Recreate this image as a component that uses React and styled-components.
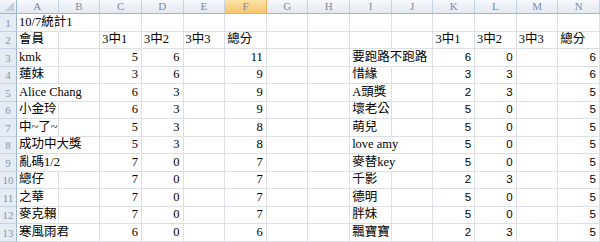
import React from 'react';
import styled, { createGlobalStyle } from 'styled-components';

const GlobalStyle = createGlobalStyle`
  html, body {
    margin: 0;
    padding: 0;
    background: #fff;
    overflow: hidden;
  }
`;

const COLS = ['A', 'B', 'C', 'D', 'E', 'F', 'G', 'H', 'I', 'J', 'K', 'L', 'M', 'N'];

const rows = [
  { A: '10/7統計1' },
  { A: '會員', C: '3中1', D: '3中2', E: '3中3', F: '總分', K: '3中1', L: '3中2', M: '3中3', N: '總分' },
  { A: 'kmk', C: 5, D: 6, F: 11, I: '要跑路不跑路', K: 6, L: 0, N: 6 },
  { A: '蓮妹', C: 3, D: 6, F: 9, I: '惜緣', K: 3, L: 3, N: 6 },
  { A: 'Alice Chang', C: 6, D: 3, F: 9, I: 'A頭獎', K: 2, L: 3, N: 5 },
  { A: '小金玲', C: 6, D: 3, F: 9, I: '壞老公', K: 5, L: 0, N: 5 },
  { A: '中~了~', C: 5, D: 3, F: 8, I: '萌兒', K: 5, L: 0, N: 5 },
  { A: '成功中大獎', C: 5, D: 3, F: 8, I: 'love amy', K: 5, L: 0, N: 5 },
  { A: '亂碼1/2', C: 7, D: 0, F: 7, I: '麥替key', K: 5, L: 0, N: 5 },
  { A: '總仔', C: 7, D: 0, F: 7, I: '千影', K: 2, L: 3, N: 5 },
  { A: '之華', C: 7, D: 0, F: 7, I: '德明', K: 5, L: 0, N: 5 },
  { A: '麥克賴', C: 7, D: 0, F: 7, I: '胖妹', K: 5, L: 0, N: 5 },
  { A: '寒風雨君', C: 6, D: 0, F: 6, I: '飄寶寶', K: 2, L: 3, N: 5 },
];

// text that runs over into the empty cell next to it hides that gridline
const SPILL = new Set([
  '10/7統計1',
  'Alice Chang',
  '成功中大獎',
  '亂碼1/2',
  '寒風雨君',
  '要跑路不跑路',
  'love amy',
  '麥替key',
]);

const Sheet = styled.div`
  display: grid;
  grid-template-columns: 17px repeat(14, 1fr);
  grid-template-rows: 14px repeat(13, 17.5px);
  width: 600px;
  height: 242px;
  font-family: 'Liberation Serif', 'Noto Sans CJK TC', serif;
  font-size: 12px;
  color: #000;
  overflow: hidden;
`;

const Corner = styled.div`
  background: linear-gradient(#f3f6fa, #dfe6ef);
  border-right: 1px solid #9eb6ce;
  border-bottom: 1px solid #9eb6ce;
  position: relative;

  &::after {
    content: '';
    position: absolute;
    right: 2px;
    bottom: 2px;
    border-left: 9px solid transparent;
    border-bottom: 9px solid #c3cfdd;
  }
`;

const ColHead = styled.div`
  display: flex;
  align-items: center;
  justify-content: center;
  background: ${(p) =>
    p.$active ? 'linear-gradient(#fbe3a8, #f6c46e)' : 'linear-gradient(#f7f9fc, #e2e9f2)'};
  border-right: 1px solid ${(p) => (p.$active ? '#f2b15a' : '#c5d2e2')};
  border-bottom: 1px solid ${(p) => (p.$active ? '#f2b15a' : '#9eb6ce')};
  color: #7a8aa0;
  font-size: 11px;
  line-height: 1;
`;

const RowHead = styled.div`
  display: flex;
  align-items: flex-end;
  justify-content: center;
  padding-bottom: 2px;
  box-sizing: border-box;
  background: #e6ecf4;
  border-right: 1px solid #9eb6ce;
  border-bottom: 1px solid #c5d2e2;
  color: #8494a9;
  font-size: 11px;
  line-height: 1;
`;

const Cell = styled.div`
  display: flex;
  align-items: flex-end;
  justify-content: ${(p) => (p.$num ? 'flex-end' : 'flex-start')};
  box-sizing: border-box;
  padding: 0 3px 1px 2px;
  border-right: 1px solid ${(p) => (p.$spill ? 'transparent' : '#dcdfe3')};
  border-bottom: 1px solid #dcdfe3;
  white-space: nowrap;
  min-width: 0;
  line-height: 15px;
  font-family: ${(p) =>
    p.$sans
      ? "'Liberation Sans', 'Noto Sans CJK TC', sans-serif"
      : "'Liberation Serif', 'Noto Sans CJK TC', serif"};
  font-size: ${(p) => (p.$sans ? '11.5px' : '12.5px')};
  position: relative;
  z-index: ${(p) => (p.$spill ? 1 : 0)};
`;

const App = () => {
  return (
    <>
      <GlobalStyle />
      <Sheet>
        <Corner />
        {COLS.map((c) => (
          <ColHead key={c} $active={c === 'F'}>
            {c}
          </ColHead>
        ))}
        {rows.map((row, i) => (
          <React.Fragment key={i}>
            <RowHead>{i + 1}</RowHead>
            {COLS.map((c) => {
              const v = row[c];
              const isNum = typeof v === 'number';
              const rightTable = ['K', 'L', 'M', 'N'].includes(c);
              return (
                <Cell key={c} $num={isNum} $sans={isNum && rightTable} $spill={SPILL.has(v)}>
                  {v}
                </Cell>
              );
            })}
          </React.Fragment>
        ))}
      </Sheet>
    </>
  );
};

export default App;
